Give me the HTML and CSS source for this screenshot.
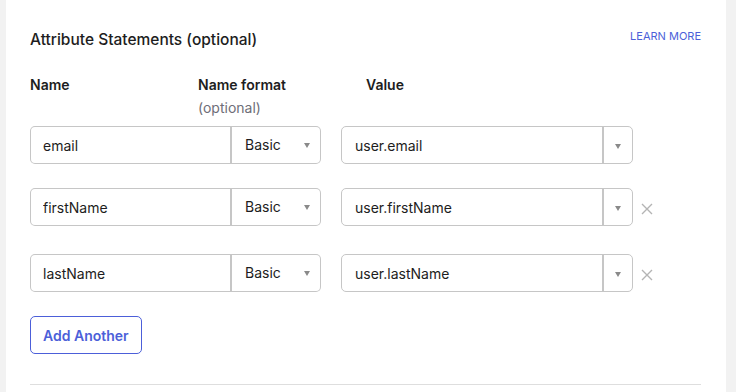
FILE: index.html
```html
<!DOCTYPE html>
<html lang="en">
<head>
    <meta charset="UTF-8">
    <meta name="viewport" content="width=device-width, initial-scale=1.0">
    <title>Attribute Statements</title>
    <link rel="stylesheet" href="styles.css">
</head>
<body>
    <div class="card">
        <div class="section-head">
            <h2 class="section-title">Attribute Statements (optional)</h2>
            <a class="learn-more" href="#">LEARN MORE</a>
        </div>

        <div class="col-heads">
            <div class="col-head">Name</div>
            <div class="col-head">Name format<span class="col-hint">(optional)</span></div>
            <div class="col-head">Value</div>
        </div>

        <div class="attr-list">
            <div class="attr-row">
                <div class="name-group">
                    <input class="name-input" type="text" value="email">
                    <div class="format-select">Basic<span class="caret"></span></div>
                </div>
                <div class="value-combo">
                    <span class="value-text">user.email</span>
                    <span class="value-toggle"><span class="caret"></span></span>
                </div>
            </div>

            <div class="attr-row">
                <div class="name-group">
                    <input class="name-input" type="text" value="firstName">
                    <div class="format-select">Basic<span class="caret"></span></div>
                </div>
                <div class="value-combo">
                    <span class="value-text">user.firstName</span>
                    <span class="value-toggle"><span class="caret"></span></span>
                </div>
                <button class="remove-btn" aria-label="Remove">
                    <svg width="12" height="12" viewBox="0 0 12 12"><path d="M1 1L11 11M11 1L1 11" stroke="#b4b4b4" stroke-width="1.4" fill="none"/></svg>
                </button>
            </div>

            <div class="attr-row">
                <div class="name-group">
                    <input class="name-input" type="text" value="lastName">
                    <div class="format-select">Basic<span class="caret"></span></div>
                </div>
                <div class="value-combo">
                    <span class="value-text">user.lastName</span>
                    <span class="value-toggle"><span class="caret"></span></span>
                </div>
                <button class="remove-btn" aria-label="Remove">
                    <svg width="12" height="12" viewBox="0 0 12 12"><path d="M1 1L11 11M11 1L1 11" stroke="#b4b4b4" stroke-width="1.4" fill="none"/></svg>
                </button>
            </div>
        </div>

        <button class="add-btn">Add Another</button>

        <hr class="divider">
    </div>
</body>
</html>
```

FILE: styles.css
```css
body {
    margin: 0;
    background: #f2f2f2;
    font-family: Inter, "Noto Sans", sans-serif;
    color: #1d1d21;
}

.card {
    background: #fff;
    margin: 0 10px 0 6px;
    min-height: 392px;
    padding: 30px 25px 0 24px;
    box-sizing: border-box;
}

.section-head {
    display: flex;
    justify-content: space-between;
    align-items: flex-start;
}

.section-title {
    margin: 0;
    font-size: 15.5px;
    font-weight: 500;
    line-height: 20px;
}

.learn-more {
    font-size: 11px;
    line-height: 14px;
    color: #4c5fd9;
    text-decoration: none;
    margin-top: -1px;
}

.col-heads {
    display: grid;
    grid-template-columns: 168px 168px 168px;
    margin-top: 25px;
}

.col-head {
    font-size: 14px;
    font-weight: 600;
    line-height: 20px;
}

.col-hint {
    display: block;
    margin-top: 3px;
    font-weight: 400;
    color: #6e6e78;
}

.attr-list {
    margin-top: 8px;
}

.attr-row {
    display: flex;
    align-items: center;
    height: 38px;
}
.attr-row + .attr-row { margin-top: 24px; }
.attr-row + .attr-row + .attr-row { margin-top: 28px; }

.name-group {
    display: flex;
    height: 38px;
}

.name-input {
    width: 202px;
    height: 38px;
    box-sizing: border-box;
    border: 1px solid #c6c6c6;
    border-right: 2px solid #c6c6c6;
    border-radius: 5px 0 0 5px;
    padding: 0 12px;
    font: inherit;
    font-size: 14px;
    color: #1d1d21;
    outline: none;
}

.format-select {
    width: 89px;
    height: 38px;
    box-sizing: border-box;
    border: 1px solid #c6c6c6;
    border-left: none;
    border-radius: 0 5px 5px 0;
    display: flex;
    align-items: center;
    justify-content: space-between;
    padding: 0 10px 2px 13px;
    font-size: 14px;
}

.caret {
    width: 0;
    height: 0;
    border-left: 3.5px solid transparent;
    border-right: 3.5px solid transparent;
    border-top: 5px solid #8a8a8a;
    margin-top: 2px;
}

.value-combo {
    margin-left: 20px;
    width: 292px;
    height: 38px;
    box-sizing: border-box;
    border: 1px solid #c6c6c6;
    border-radius: 5px;
    display: flex;
    align-items: center;
}

.value-text {
    flex: 1;
    padding-left: 13px;
    font-size: 14px;
}

.value-toggle {
    width: 28px;
    height: 100%;
    border-left: 2px solid #c6c6c6;
    display: flex;
    align-items: center;
    justify-content: center;
}

.remove-btn {
    margin-left: 8px;
    padding: 0;
    border: none;
    background: none;
    display: flex;
    margin-top: 4px;
}

.add-btn {
    margin-top: 24px;
    height: 38px;
    padding: 0 12px;
    border: 1px solid #4c5fd9;
    border-radius: 5px;
    background: #fff;
    color: #4c5fd9;
    font: inherit;
    font-size: 14px;
    font-weight: 600;
}

.divider {
    margin: 30px 0 0 0;
    border: none;
    border-top: 1px solid #dedede;
}
```
